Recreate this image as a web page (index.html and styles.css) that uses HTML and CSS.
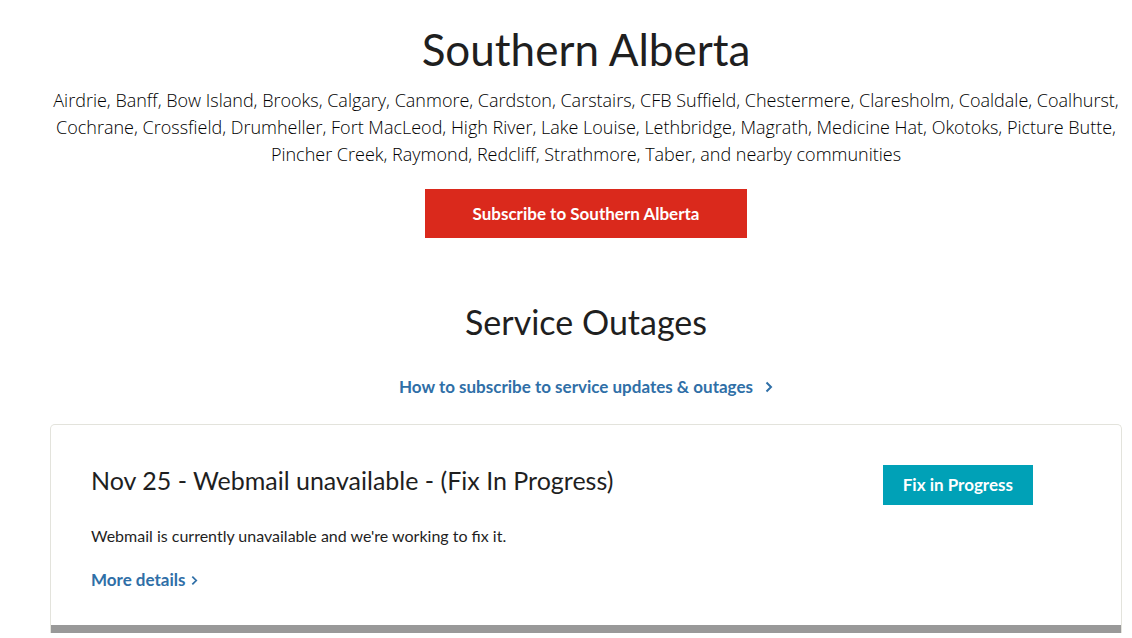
FILE: index.html
```html
<!DOCTYPE html>
<html lang="en">
<head>
    <meta charset="UTF-8">
    <meta name="viewport" content="width=device-width, initial-scale=1.0">
    <title>Service Outages - Southern Alberta</title>
    <link rel="stylesheet" href="styles.css">
</head>
<body>
    <main class="container">
        <section class="region">
            <h1>Southern Alberta</h1>
            <p class="communities">Airdrie, Banff, Bow Island, Brooks, Calgary, Canmore, Cardston, Carstairs, CFB Suffield, Chestermere, Claresholm, Coaldale, Coalhurst, Cochrane, Crossfield, Drumheller, Fort MacLeod, High River, Lake Louise, Lethbridge, Magrath, Medicine Hat, Okotoks, Picture Butte, Pincher Creek, Raymond, Redcliff, Strathmore, Taber, and nearby communities</p>
            <button type="button" class="subscribe-button">Subscribe to Southern Alberta</button>
        </section>

        <section class="outages">
            <h2>Service Outages</h2>
            <a href="#" class="link help-link">
                How to subscribe to service updates &amp; outages
                <svg class="chevron" viewBox="0 0 8 12" aria-hidden="true"><path d="M1.5 1.5L6 6L1.5 10.5"/></svg>
            </a>

            <article class="card">
                <div class="card-body">
                    <div class="card-text">
                        <h3>Nov 25 - Webmail unavailable - (Fix In Progress)</h3>
                        <p>Webmail is currently unavailable and we're working to fix it.</p>
                        <a href="#" class="link more-link">
                            More details
                            <svg class="chevron small" viewBox="0 0 8 12" aria-hidden="true"><path d="M1.5 1.5L6 6L1.5 10.5"/></svg>
                        </a>
                    </div>
                    <span class="status">Fix in Progress</span>
                </div>
                <div class="card-footer"></div>
            </article>
        </section>
    </main>
</body>
</html>
```
FILE: styles.css
```css
* {
    box-sizing: border-box;
}

body {
    margin: 0;
    background: #fff;
    color: #1f1f1f;
    font-family: Lato, "Liberation Sans", sans-serif;
    font-size: 17px;
    line-height: 24px;
}

h1, h2, h3, p {
    margin: 0;
    font-weight: 400;
}

.container {
    padding: 23px 10px 0 50px;
}

.region,
.outages {
    display: flex;
    flex-direction: column;
    align-items: center;
    text-align: center;
}

h1 {
    font-size: 44px;
    line-height: 52px;
}

.communities {
    margin: 12px -8px 21px;
    color: #000;
    font-family: "Open Sans", Lato, sans-serif;
    font-size: 18px;
    font-weight: 300;
    line-height: 27px;
}

.subscribe-button {
    padding: 12px 48px;
    border: none;
    background: #da291c;
    color: #fff;
    font-family: inherit;
    font-size: 17px;
    font-weight: 700;
    line-height: 25px;
    cursor: pointer;
}

.outages {
    padding-top: 63px;
}

h2 {
    font-size: 34px;
    line-height: 42px;
}

.link {
    display: inline-flex;
    align-items: center;
    color: #2f6fa7;
    font-weight: 700;
    text-decoration: none;
}

.link:hover {
    text-decoration: underline;
}

.help-link {
    gap: 12px;
    margin: 32px 0 25px;
}

.more-link {
    gap: 6px;
}

.chevron {
    width: 8px;
    height: 12px;
    fill: none;
    stroke: currentColor;
    stroke-width: 2;
}

.chevron.small {
    width: 7px;
    height: 11px;
}

.card {
    width: 100%;
    border: 1px solid #e3e3dc;
    border-bottom: none;
    border-radius: 5px 5px 0 0;
    text-align: left;
}

.card-body {
    display: flex;
    justify-content: space-between;
    align-items: flex-start;
    padding: 40px 88px 33px 40px;
}

h3 {
    font-size: 25px;
    line-height: 30px;
}

.card-text p {
    margin: 29px 0 20px;
    font-size: 16px;
}

.status {
    padding: 8px 20px;
    background: #00a1b7;
    color: #fff;
    font-weight: 700;
}

.card-footer {
    height: 8px;
    background: #999;
}
```
